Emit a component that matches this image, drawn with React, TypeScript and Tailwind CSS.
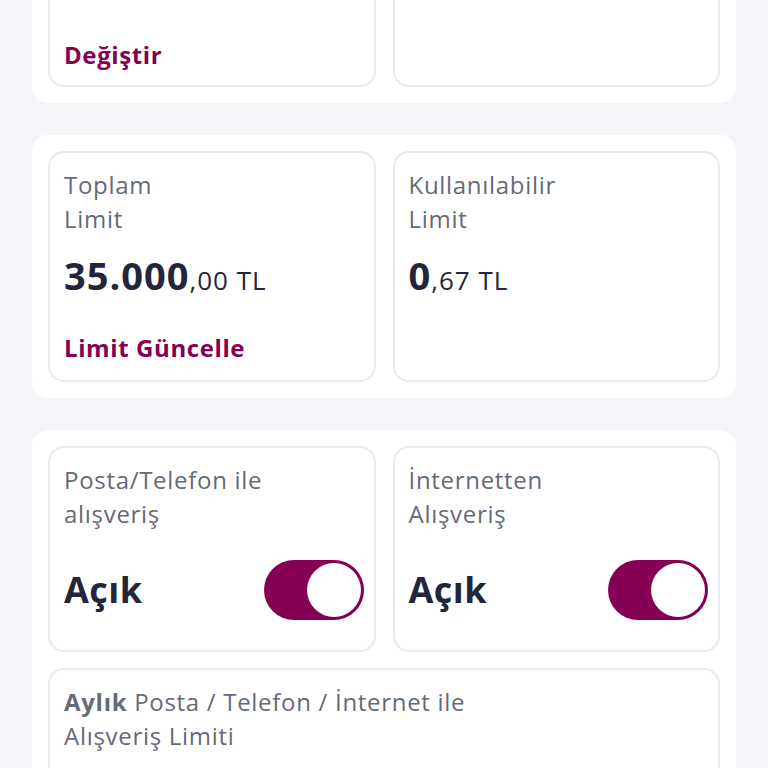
import type { ReactNode } from 'react';

const font = { fontFamily: '"Open Sans", "Noto Sans", sans-serif' };

function Panel({ children, className = '' }: { children: ReactNode; className?: string }) {
  return (
    <section className={`mx-8 rounded-2xl bg-white p-4 ${className}`}>
      <div className="grid grid-cols-2 gap-x-[17px] gap-y-4">{children}</div>
    </section>
  );
}

function Card({ children, className = '' }: { children: ReactNode; className?: string }) {
  return (
    <div className={`flex flex-col rounded-2xl border-2 border-[#e9e9ee] bg-white ${className}`}>
      {children}
    </div>
  );
}

function Label({ children }: { children: ReactNode }) {
  return <p className="text-[24px] leading-[34px] tracking-[0.7px] text-[#656a77]">{children}</p>;
}

function Amount({ whole, cents }: { whole: string; cents: string }) {
  return (
    <p className="mt-[19px] text-[#23263a]">
      <span className="text-[38px] font-bold leading-[40px] tracking-[1px]">{whole}</span>
      <span className="text-[26px] leading-[40px] tracking-[1px]">,{cents} TL</span>
    </p>
  );
}

function Toggle({ on }: { on: boolean }) {
  return (
    <button
      type="button"
      aria-pressed={on}
      className="flex h-[60px] w-[100px] items-center justify-end rounded-full bg-[#850052] p-[3px]"
    >
      <span className="block h-[54px] w-[54px] rounded-full bg-white" />
    </button>
  );
}

function SwitchCard({ title, on }: { title: ReactNode; on: boolean }) {
  return (
    <Card className="h-[206px] pb-[30px] pl-[14px] pr-[10px] pt-[15px]">
      <Label>{title}</Label>
      <div className="mt-auto flex items-center justify-between">
        <span className="text-[36px] font-bold leading-[40px] tracking-[0.5px] text-[#23263a]">Açık</span>
        <Toggle on={on} />
      </div>
    </Card>
  );
}

export default function App() {
  return (
    <div className="min-h-screen overflow-hidden bg-[#f4f5f8] pb-10" style={font}>
      <Panel className="-mt-[79px]">
        <Card className="h-[150px] justify-end px-[14px] pb-[13px]">
          <button
            type="button"
            className="text-left text-[24px] font-bold leading-[34px] tracking-[0.6px] text-[#850052]"
          >
            Değiştir
          </button>
        </Card>
        <Card className="h-[150px]" />
      </Panel>

      <Panel className="mt-8">
        <Card className="h-[231px] px-[14px] pb-[15px] pt-[15px]">
          <Label>
            Toplam
            <br />
            Limit
          </Label>
          <Amount whole="35.000" cents="00" />
          <button
            type="button"
            className="mt-auto text-left text-[24px] font-bold leading-[34px] tracking-[0.6px] text-[#850052]"
          >
            Limit Güncelle
          </button>
        </Card>
        <Card className="h-[231px] px-[14px] pt-[15px]">
          <Label>
            Kullanılabilir
            <br />
            Limit
          </Label>
          <Amount whole="0" cents="67" />
        </Card>
      </Panel>

      <Panel className="mt-8">
        <SwitchCard
          title={
            <>
              Posta/Telefon ile
              <br />
              alışveriş
            </>
          }
          on
        />
        <SwitchCard
          title={
            <>
              İnternetten
              <br />
              Alışveriş
            </>
          }
          on
        />
        <Card className="col-span-2 h-[200px] px-[14px] pt-[15px]">
          <Label>
            <span className="font-bold">Aylık</span> Posta / Telefon / İnternet ile
            <br />
            Alışveriş Limiti
          </Label>
        </Card>
      </Panel>
    </div>
  );
}
